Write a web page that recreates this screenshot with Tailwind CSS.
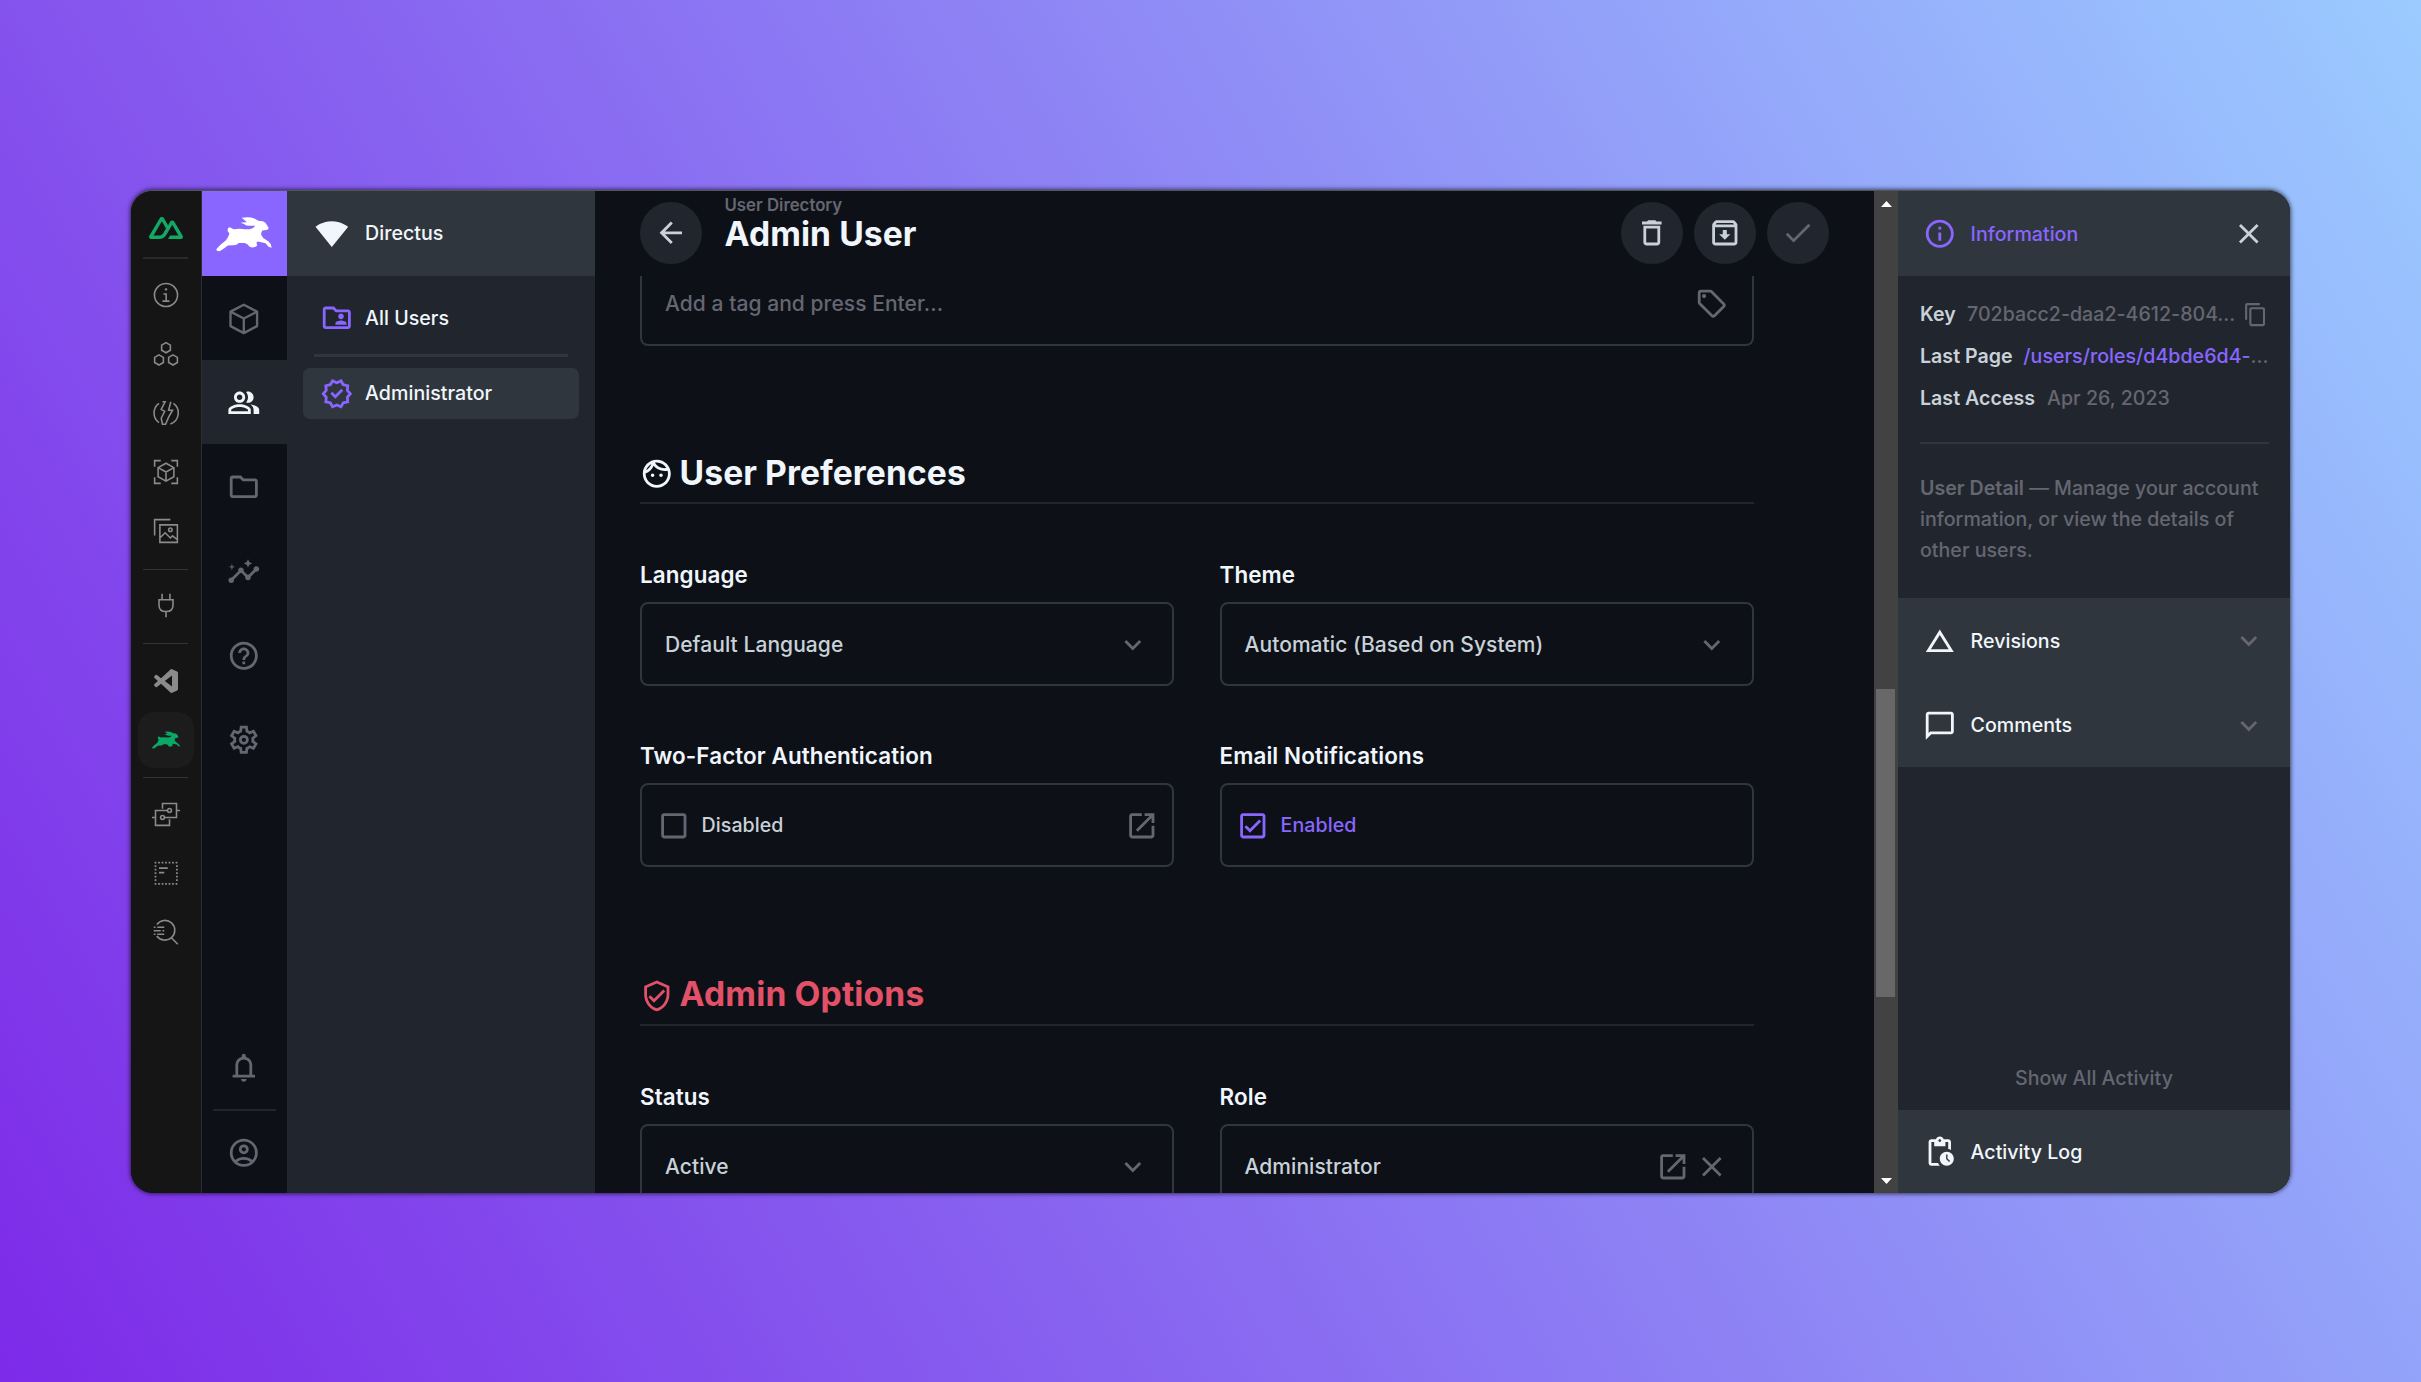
<!DOCTYPE html>
<html lang="en">
<head>
<meta charset="utf-8">
<title>Directus</title>
<script src="https://cdn.jsdelivr.net/npm/@tailwindcss/browser@4"></script>
</head>
<body class="w-[2421px] h-[1382px] overflow-hidden pl-[131px] pt-[190px] bg-[linear-gradient(60deg,#7d2ae8,#9bcbff)] font-['Inter',sans-serif] text-[#f0f6fc]">
<svg class="hidden">
  <symbol id="rabbit" viewBox="289 110 168 104"><path d="M289 208L302 194 318 181Q326 172 329 160L324 153Q322 141 330 141L342 147Q360 144 376 147L390 147Q402 144 407 136L397 136Q384 139 371 130L362 127Q374 125 382 126L366 112Q390 108 406 115L416 121Q432 121 438 128L446 140Q450 148 441 149L428 151Q424 158 425 164L431 173 447 184Q457 192 456 203L447 200 438 189 415 184Q408 186 413 195Q410 201 396 202L389 199Q386 191 375 188L357 188Q352 196 338 195L324 196Q316 203 308 208L300 213Q292 215 289 208Z"/></symbol>
</svg>
<div class="flex w-[2159px] h-[1003px] rounded-[22px] overflow-hidden shadow-[0_0_4px_1px_rgba(0,0,0,0.6)] bg-[#0d1117] border-t border-[#505558]">

  <!-- devtools rail -->
  <div class="w-[71px] pr-px shrink-0 bg-[#151515] border-r border-[#2e2e2e] flex flex-col items-center text-[#8b8b8b]">
    <div class="h-[66px] shrink-0 pt-[8px] flex items-center justify-center"><svg class="size-[34px] fill-[#12a866]" viewBox="0 0 24 24"><path d="M13.4642 19.8295h8.9218c.2834 0 .5618-.0723.8072-.2098a1.5899 1.5899 0 0 0 .5908-.5732 1.5293 1.5293 0 0 0 .2158-.783 1.529 1.529 0 0 0-.2167-.7828L17.7916 7.4142a1.5904 1.5904 0 0 0-.5907-.573 1.6524 1.6524 0 0 0-.807-.2099c-.2833 0-.5616.0724-.807.2098a1.5904 1.5904 0 0 0-.5907.5731L13.4642 9.99l-2.9954-5.0366a1.5913 1.5913 0 0 0-.591-.573 1.6533 1.6533 0 0 0-.8071-.2098c-.2834 0-.5617.0723-.8072.2097a1.5913 1.5913 0 0 0-.591.573L.2168 17.4808A1.5292 1.5292 0 0 0 0 18.2635c-.0001.2749.0744.545.2157.783a1.59 1.59 0 0 0 .5908.5732c.2455.1375.5239.2098.8073.2098h5.6003c2.2189 0 3.8552-.9688 4.9811-2.8591l2.7337-4.7 1.4642-2.5155 4.3944 7.5541h-5.8586ZM7.123 17.3694l-3.9083-.0009 5.8586-10.0703 2.9232 5.0352-1.9572 3.366c-.7478 1.2247-1.5973 1.67-2.9163 1.67Z"/></svg></div>
    <div class="w-[45px] h-[2px] bg-[#292929]"></div>
    <div class="mt-[8px] flex flex-col items-center gap-[3px] [&>svg]:my-[14px] [&>svg]:size-7 [&>svg]:shrink-0">
      <svg viewBox="0 0 32 32" fill="none" stroke="currentColor" stroke-width="1.8"><circle cx="16" cy="16" r="13.2"/><path d="M13 14.8h3.2V23M12 23h8"/><circle cx="16" cy="9.6" r="1" fill="currentColor" stroke-width="1"/></svg>
      <svg viewBox="0 0 32 32" fill="none" stroke="currentColor" stroke-width="1.8"><path d="M16 3l5 2.9v5.8L16 14.600l-5-2.900V5.900zM8 17l5 2.900v5.800L8 28.600l-5-2.900v-5.800zM24 17l5 2.900v5.800l-5 2.900-5-2.900v-5.800z"/></svg>
      <svg viewBox="0 0 32 32" fill="none" stroke="currentColor" stroke-width="1.800"><path d="M8 5A13.500 13.500 0 0 0 8 27M24.500 5A13.500 13.500 0 0 1 21 28.600M12 3.200h3l-4.500 8.800 4 2-4 8 1.500 6.800h3.500l3.500-8 4.500-8h-4.500l2.500-9.600"/></svg>
      <svg viewBox="0 0 32 32" fill="none" stroke="currentColor" stroke-width="1.800"><path d="M10 3H3v7M22 3h7v7M10 29H3v-7M22 29h7v-7M16 6l9 5v10.500l-9 5-9-5V11zM7 11l9 5 9-5M16 16v10.500"/></svg>
      <svg viewBox="0 0 32 32" fill="none" stroke="currentColor" stroke-width="1.800"><path d="M9 9h20v20H9zM3 21V3h18M9 24l6-6 6 6 2.500-2.500L29 26"/><circle cx="21" cy="14.500" r="2"/></svg>
      <div class="mt-[7px] mb-[4px] w-[45px] h-px bg-[#333]"></div>
      <svg viewBox="0 0 32 32" fill="none" stroke="currentColor" stroke-width="1.800"><path d="M11.500 3v7M20.500 3v7M8 10h16v6q0 7.500-8 7.500T8 16zM16 23.500V30"/></svg>
      <div class="mt-[7px] mb-[6px] w-[45px] h-px bg-[#333]"></div>
      <svg viewBox="-2 -2 28 28" fill="currentColor"><path d="M23.150 2.587L18.210.21a1.494 1.494 0 0 0-1.705.29l-9.460 8.630-4.120-3.128a.999.999 0 0 0-1.276.057L.327 7.261A1 1 0 0 0 .326 8.740L3.899 12 .326 15.260a1 1 0 0 0 .001 1.479L1.650 17.940a.999.999 0 0 0 1.276.057l4.120-3.128 9.460 8.630a1.492 1.492 0 0 0 1.704.29l4.942-2.377A1.500 1.500 0 0 0 24 20.060V3.939a1.500 1.500 0 0 0-.85-1.352zm-5.146 14.861L10.826 12l7.178-5.448v10.896z"/></svg>
      <div class="size-14 rounded-2xl bg-[#1c1c1c] flex items-center justify-center"><svg class="w-7 h-[18px] fill-[#0aa966]"><use href="#rabbit"/></svg></div>
      <div class="mt-[6px] mb-[5px] w-[45px] h-px bg-[#333]"></div>
      <svg viewBox="0 0 32 32" fill="none" stroke="currentColor" stroke-width="1.800"><path d="M12 10V4h16v16H14M20 22v7H4V12h14M0 20h4M28 12h4"/><circle cx="20" cy="12" r="2.200"/><circle cx="12" cy="20" r="2.200"/></svg>
      <svg viewBox="0 0 32 32" fill="none" stroke="currentColor" stroke-width="2"><path stroke-dasharray="2 2" d="M3 4h27M3 28.500h27M4 7v20M28.500 7v20"/><path d="M8 10.500h10M8 15.500h6"/></svg>
      <svg viewBox="0 0 32 32" fill="none" stroke="currentColor" stroke-width="1.800"><path d="M5.500 7.500A11.300 11.300 0 1 1 5.500 20.500M21.500 22l8 8M2 10.500h2M6 10.500h8M2 14.500h8M12 14.500h2M2 18.500h2M6 18.500h8"/></svg>
    </div>
  </div>

  <!-- module bar -->
  <div class="w-[84.500px] shrink-0 bg-[#0d1117] flex flex-col text-[#666672] [&>div>svg]:size-[33.600px] [&>div]:flex [&>div]:items-center [&>div]:justify-center [&>div]:shrink-0">
    <div class="h-[84.500px] bg-[#8866ff] pt-[2px]"><svg class="fill-white !w-[56px] !h-[34.500px]"><use href="#rabbit"/></svg></div>
    <div class="h-[84.300px] pt-[2px]"><svg viewBox="0 0 24 24" fill="none" stroke="currentColor" stroke-width="1.700"><path stroke-linejoin="round" d="M12 2l9.500 4.900V17.200L12 22.200 2.500 17.200V6.900zM2.500 6.900L12 11.800l9.500-4.900M12 11.800v10.400"/></svg></div>
    <div class="h-[84.300px] pt-[2px] bg-[#21262e] text-[#f0f6fc]"><svg viewBox="0 0 24 24" fill="currentColor"><path d="M16.670 13.130C18.040 14.060 19 15.320 19 17v3h4v-3c0-2.180-3.570-3.470-6.330-3.870zM15 12c2.210 0 4-1.790 4-4s-1.790-4-4-4c-.47 0-.91.1-1.330.24C14.500 5.270 15 6.580 15 8s-.5 2.730-1.330 3.760c.42.14.86.24 1.330.24zM9 12c2.210 0 4-1.790 4-4s-1.790-4-4-4-4 1.790-4 4 1.790 4 4 4zm0-6c1.100 0 2 .9 2 2s-.9 2-2 2-2-.9-2-2 .9-2 2-2zM9 13c-2.670 0-8 1.340-8 4v3h16v-3c0-2.660-5.330-4-8-4zm6 5H3v-.99C3.200 16.290 6.300 15 9 15s5.800 1.290 6 2v1z"/></svg></div>
    <div class="h-[84.300px] pt-[2px]"><svg viewBox="0 0 24 24" fill="currentColor"><path d="M9.170 6l2 2H20v10H4V6h5.170M10 4H4c-1.100 0-1.990.9-1.990 2L2 18c0 1.100.9 2 2 2h16c1.100 0 2-.9 2-2V8c0-1.100-.9-2-2-2h-8l-2-2z"/></svg></div>
    <div class="h-[84.300px] pt-[2px]"><svg viewBox="0 0 24 24" fill="currentColor"><path d="M21 8c-1.450 0-2.260 1.440-1.930 2.510l-3.550 3.560c-.3-.09-.74-.09-1.040 0l-2.550-2.550C12.270 10.450 11.460 9 10 9c-1.450 0-2.270 1.440-1.930 2.520l-4.560 4.550C2.440 15.740 1 16.550 1 18c0 1.100.9 2 2 2 1.450 0 2.260-1.440 1.930-2.510l4.550-4.560c.3.09.74.09 1.040 0l2.550 2.550C12.730 16.550 13.540 18 15 18c1.450 0 2.270-1.440 1.930-2.520l3.560-3.550C21.560 12.260 23 11.450 23 10c0-1.100-.9-2-2-2zM15 9l.94-2.070L18 6l-2.060-.93L15 3l-.92 2.070L12 6l2.080.93zM3.500 11L4 9l2-.5L4 8l-.5-2L3 8l-2 .5L3 9z"/></svg></div>
    <div class="h-[84.300px] pt-[2px]"><svg viewBox="0 0 24 24" fill="currentColor"><path d="M11 18h2v-2h-2v2zm1-16C6.480 2 2 6.480 2 12s4.480 10 10 10 10-4.480 10-10S17.520 2 12 2zm0 18c-4.410 0-8-3.590-8-8s3.590-8 8-8 8 3.590 8 8-3.590 8-8 8zm0-14c-2.210 0-4 1.790-4 4h2c0-1.100.9-2 2-2s2 .9 2 2c0 2-3 1.750-3 5h2c0-2.250 3-2.500 3-5 0-2.210-1.790-4-4-4z"/></svg></div>
    <div class="h-[84.300px] pt-[2px]"><svg viewBox="0 0 24 24" fill="currentColor"><path d="m9.250 22-.4-3.200q-.325-.125-.612-.3-.288-.175-.563-.375L4.700 19.375l-2.750-4.750 2.575-1.950Q4.500 12.500 4.500 12.337v-.675q0-.162.025-.337L1.950 9.375l2.750-4.750 2.975 1.250q.275-.2.575-.375.3-.175.6-.3l.4-3.200h5.500l.4 3.200q.325.125.613.3.287.175.562.375l2.975-1.250 2.750 4.750-2.575 1.950q.025.175.025.337v.675q0 .163-.05.338l2.575 1.950-2.750 4.750-2.950-1.250q-.275.2-.575.375-.3.175-.6.3l-.4 3.200Zm2.800-6.500q1.450 0 2.475-1.025Q15.550 13.450 15.550 12q0-1.450-1.025-2.475Q13.500 8.500 12.050 8.500q-1.475 0-2.488 1.025Q8.550 10.550 8.550 12q0 1.450 1.012 2.475Q10.575 15.500 12.050 15.500Zm0-2q-.625 0-1.062-.438Q10.550 12.625 10.550 12t.438-1.062q.437-.438 1.062-.438t1.063.438q.437.437.437 1.062t-.437 1.062q-.438.438-1.063.438ZM11 20h1.975l.35-2.650q.775-.2 1.438-.587.662-.388 1.212-.938l2.475 1.025.975-1.700-2.150-1.625q.125-.35.175-.737.05-.388.05-.788t-.05-.787q-.05-.388-.175-.738l2.150-1.625-.975-1.700-2.475 1.050q-.55-.575-1.212-.963-.663-.387-1.438-.587L13 4h-1.975l-.35 2.650q-.775.2-1.437.587-.663.388-1.213.938L5.550 7.150l-.975 1.700 2.150 1.600q-.125.375-.175.750-.05.375-.05.8 0 .4.05.775t.175.750l-2.150 1.625.975 1.700 2.475-1.050q.55.575 1.213.962.662.388 1.437.588Z"/></svg></div>
    <div class="mt-auto h-[83px] pt-[2px]"><svg viewBox="0 0 24 24" fill="currentColor"><path d="M4 19v-2h2v-7q0-2.075 1.250-3.687Q8.500 4.700 10.500 4.200v-.7q0-.625.438-1.062Q11.375 2 12 2t1.063.438q.437.437.437 1.062v.7q2 .5 3.250 2.113Q18 7.925 18 10v7h2v2Zm8 3q-.825 0-1.412-.587Q10 20.825 10 20h4q0 .825-.587 1.413Q12.825 22 12 22Zm-4-5h8v-7q0-1.650-1.175-2.825Q13.650 6 12 6q-1.650 0-2.825 1.175Q8 8.350 8 10Z"/></svg></div>
    <div class="mx-[11px] h-[2.500px] bg-[#21262e]"></div>
    <div class="h-[82px] pt-px"><svg viewBox="0 0 24 24" fill="currentColor"><path d="M5.850 17.100q1.275-.975 2.850-1.538Q10.275 15 12 15t3.300.562q1.575.563 2.850 1.538.875-1.025 1.363-2.325Q20 13.475 20 12q0-3.325-2.337-5.663Q15.325 4 12 4T6.338 6.337Q4 8.675 4 12q0 1.475.488 2.775.487 1.300 1.362 2.325ZM12 13q-1.475 0-2.488-1.012Q8.500 10.975 8.500 9.500t1.012-2.488Q10.525 6 12 6t2.488 1.012Q15.500 8.025 15.500 9.500t-1.012 2.488Q13.475 13 12 13Zm0 9q-2.075 0-3.900-.788-1.825-.787-3.175-2.137-1.350-1.350-2.137-3.175Q2 14.075 2 12t.788-3.900q.787-1.825 2.137-3.175 1.350-1.350 3.175-2.138Q9.925 2 12 2t3.900.787q1.825.788 3.175 2.138 1.350 1.350 2.137 3.175Q22 9.925 22 12t-.788 3.900q-.787 1.825-2.137 3.175-1.350 1.350-3.175 2.137Q14.075 22 12 22Zm0-2q1.325 0 2.500-.387 1.175-.388 2.150-1.113-.975-.725-2.150-1.113Q13.325 17 12 17t-2.500.387q-1.175.388-2.150 1.113.975.725 2.150 1.113Q10.675 20 12 20Zm0-9q.65 0 1.075-.425.425-.425.425-1.075 0-.65-.425-1.075Q12.650 8 12 8q-.65 0-1.075.425Q10.500 8.850 10.500 9.500q0 .65.425 1.075Q11.350 11 12 11Z"/></svg></div>
  </div>

  <!-- navigation -->
  <div class="w-[308.500px] shrink-0 bg-[#21262e] text-[19.600px] font-medium tracking-[0.03px]">
    <div class="h-[84.500px] pt-px bg-[#30363d] flex items-center pl-[28px] gap-[17px]">
      <svg class="size-[33.600px] fill-[#f0f6fc]" viewBox="0 0 24 24"><path d="M12.010 21.490L23.640 7c-.45-.34-4.930-4-11.640-4C5.280 3 .81 6.660.36 7l11.630 14.490.01.01.01-.01z"/></svg>
      <span>Directus</span>
    </div>
    <div class="pl-[16.500px] pr-[16.500px] pt-[17px]">
      <div class="h-[50.500px] pt-px flex items-center pl-[17px] gap-[11.500px]">
        <svg class="size-[33.600px] fill-[#8866ff]" viewBox="0 0 24 24"><path d="M20 6h-8l-2-2H4c-1.100 0-1.990.9-1.990 2L2 18c0 1.100.9 2 2 2h16c1.100 0 2-.9 2-2V8c0-1.100-.9-2-2-2zm0 12H4V6h5.170l2 2H20v10zM15 13c1.100 0 2-.9 2-2s-.9-2-2-2-2 .9-2 2 .9 2 2 2zM11 17h8v-1c0-1.330-2.670-2-4-2s-4 .67-4 2v1z"/></svg>
        <span>All Users</span>
      </div>
      <div class="mt-[11px] mb-[11.500px] mx-[11px] h-[2.500px] bg-[#30363d]"></div>
      <div class="h-[50.500px] pt-px rounded-[7px] bg-[#30363d] flex items-center pl-[17px] gap-[11.500px]">
        <svg class="size-[33.600px] fill-[#8866ff]" viewBox="0 0 24 24"><path d="m8.600 22.500-1.900-3.200-3.600-.8.350-3.700L1 12l2.450-2.800-.35-3.700 3.600-.8 1.900-3.200L12 2.950l3.400-1.450 1.900 3.200 3.600.8-.35 3.700L23 12l-2.450 2.800.35 3.700-3.600.8-1.900 3.200-3.400-1.450Zm.85-2.550 2.550-1.100 2.600 1.100 1.400-2.400 2.750-.65-.25-2.800 1.850-2.100-1.850-2.150.25-2.800-2.750-.6-1.450-2.400L12 5.150l-2.600-1.100L8 6.450l-2.750.6.25 2.800L3.650 12l1.850 2.100-.25 2.850 2.750.6Zm1.500-4.400L16.600 9.900l-1.400-1.450-4.250 4.250-2.150-2.100L7.400 12Z"/></svg>
        <span>Administrator</span>
      </div>
    </div>
  </div>

  <!-- item form -->
  <div class="w-[1279px] shrink-0 h-full flex flex-col overflow-hidden text-[#c9d1d9]">
    <div class="h-[84.500px] shrink-0 flex items-center pl-[45px] pr-[45px]">
      <div class="size-[62px] rounded-full bg-[#21262e] flex items-center justify-center"><svg class="size-[33.600px] fill-current" viewBox="0 0 24 24"><path d="M20 11H7.830l5.590-5.590L12 4l-8 8 8 8 1.410-1.410L7.830 13H20v-2z"/></svg></div>
      <div class="ml-[22.500px] -mt-[27px]">
        <div class="text-[16.800px] leading-[22px] font-semibold text-[#666672]"><span>User Directory</span></div>
        <div class="text-[33.600px] leading-[36px] h-[30px] font-bold tracking-[0.1px] text-[#f0f6fc]"><span>Admin User</span></div>
      </div>
      <div class="ml-auto flex gap-[11px] [&>div]:size-[62px] [&>div]:rounded-full [&>div]:bg-[#21262e] [&>div]:flex [&>div]:items-center [&>div]:justify-center">
        <div><svg class="size-[33.600px] fill-current" viewBox="0 0 24 24"><path d="M16 9v10H8V9h8m-1.500-6h-5l-1 1H5v2h14V4h-3.500l-1-1zM18 7H6v12c0 1.100.9 2 2 2h8c1.100 0 2-.9 2-2V7z"/></svg></div>
        <div><svg class="size-[33.600px] fill-current" viewBox="0 0 24 24"><path d="M20.540 5.230l-1.390-1.680C18.880 3.210 18.470 3 18 3H6c-.47 0-.88.21-1.160.55L3.460 5.230C3.170 5.570 3 6.020 3 6.500V19c0 1.100.9 2 2 2h14c1.100 0 2-.9 2-2V6.500c0-.48-.17-.93-.46-1.270zM6.240 5h11.520l.83 1H5.420l.82-1zM5 19V8h14v11H5zm8.450-9h-2.900v3H8l4 4 4-4h-2.550z"/></svg></div>
        <div class="text-[#666672]"><svg class="size-[33.600px] fill-current" viewBox="0 0 24 24"><path d="M9 16.170L4.830 12l-1.420 1.410L9 19 21 7l-1.410-1.410L9 16.170z"/></svg></div>
      </div>
    </div>
    <div class="ml-[45px] w-[1113.500px] text-[21px] font-medium tracking-[0.06px]">
      <div class="h-[70px] border-[2.800px] border-t-0 border-[#30363d] rounded-b-[8px] flex items-start pt-[11px] pl-[23px] pr-[23px] text-[#666672]">
        <span class="leading-[34px]">Add a tag and press Enter...</span>
        <svg class="ml-auto size-[33.600px] fill-current" viewBox="0 0 24 24"><path d="M21.410 11.580l-9-9C12.050 2.220 11.550 2 11 2H4c-1.100 0-2 .9-2 2v7c0 .55.22 1.050.59 1.420l9 9c.36.36.86.58 1.410.58s1.050-.22 1.410-.59l7-7c.37-.36.59-.86.59-1.410s-.23-1.060-.59-1.420zM13 20.010L4 11V4h7v-.01l9 9-7 7.020z"/><circle cx="6.500" cy="6.500" r="1.500"/></svg>
      </div>
      <div class="mt-[102.500px] h-[48px] pt-[2px] flex items-center gap-[6px] text-[33.600px] font-bold tracking-[0.1px] text-[#f0f6fc]">
        <svg class="size-[33.600px] fill-current mt-[2px]" viewBox="0 0 24 24"><path d="M10.250 13c0 .69-.56 1.250-1.250 1.250S7.750 13.690 7.750 13s.56-1.250 1.250-1.250 1.250.56 1.250 1.250zM15 11.750c-.69 0-1.250.56-1.250 1.250s.56 1.250 1.250 1.250 1.250-.56 1.250-1.250-.56-1.250-1.250-1.250zm7 .25c0 5.520-4.480 10-10 10S2 17.520 2 12 6.480 2 12 2s10 4.480 10 10zM10.660 4.120C12.060 6.440 14.600 8 17.500 8c.46 0 .91-.05 1.340-.12C17.440 5.560 14.900 4 12 4c-.46 0-.91.05-1.340.12zM4.420 9.470c1.710-.97 3.030-2.550 3.660-4.440C6.370 6 5.050 7.580 4.420 9.470zM20 12c0-.78-.12-1.530-.33-2.240-.7.15-1.420.24-2.170.24-3.130 0-5.920-1.440-7.760-3.690C8.690 8.870 6.600 10.880 4 11.860c.01.04 0 .09 0 .14 0 4.410 3.590 8 8 8s8-3.590 8-8z"/></svg>
        <span>User Preferences</span>
      </div>
      <div class="mt-[6px] h-[2px] bg-[#21262e]"></div>
      <div class="mt-[56px] grid grid-cols-2 gap-x-[45.500px] gap-y-[55px]">
        <div>
          <div class="text-[22.400px] leading-[28px] pt-px font-semibold tracking-[0.11px] text-[#f0f6fc]"><span>Language</span></div>
          <div class="mt-[13px] h-[84px] pt-px border-[2.800px] border-[#30363d] rounded-[8px] flex items-center pl-[23px] pr-[22px]"><span>Default Language</span><svg class="ml-auto size-[33.600px] fill-[#666672]" viewBox="0 0 24 24"><path d="M16.590 8.590L12 13.170 7.410 8.590 6 10l6 6 6-6z"/></svg></div>
        </div>
        <div>
          <div class="text-[22.400px] leading-[28px] pt-px font-semibold tracking-[0.11px] text-[#f0f6fc]"><span>Theme</span></div>
          <div class="mt-[13px] h-[84px] pt-px border-[2.800px] border-[#30363d] rounded-[8px] flex items-center pl-[23px] pr-[23px]"><span>Automatic (Based on System)</span><svg class="ml-auto size-[33.600px] fill-[#666672]" viewBox="0 0 24 24"><path d="M16.590 8.590L12 13.170 7.410 8.590 6 10l6 6 6-6z"/></svg></div>
        </div>
        <div>
          <div class="text-[22.400px] leading-[28px] pt-px font-semibold tracking-[0.11px] text-[#f0f6fc]"><span>Two-Factor Authentication</span></div>
          <div class="mt-[13px] h-[84px] pt-[2px] border-[2.800px] border-[#30363d] rounded-[8px] flex items-center pl-[15px] pr-[13px]"><svg class="size-[33.600px] fill-[#666672]" viewBox="0 0 24 24"><path d="M19 5v14H5V5h14m0-2H5c-1.100 0-2 .9-2 2v14c0 1.100.9 2 2 2h14c1.100 0 2-.9 2-2V5c0-1.100-.9-2-2-2z"/></svg><span class="ml-[11px] text-[19.600px]">Disabled</span><svg class="ml-auto size-[33.600px] fill-[#666672]" viewBox="0 0 24 24"><path d="M19 19H5V5h7V3H5c-1.110 0-2 .9-2 2v14c0 1.100.89 2 2 2h14c1.100 0 2-.9 2-2v-7h-2v7zM14 3v2h3.590l-9.830 9.830 1.410 1.410L19 6.410V10h2V3h-7z"/></svg></div>
        </div>
        <div>
          <div class="text-[22.400px] leading-[28px] pt-px font-semibold tracking-[0.11px] text-[#f0f6fc]"><span>Email Notifications</span></div>
          <div class="mt-[13px] h-[84px] pt-[2px] border-[2.800px] border-[#30363d] rounded-[8px] flex items-center pl-[14px] text-[#8866ff]"><svg class="size-[33.600px] fill-current" viewBox="0 0 24 24"><path d="M19 3H5c-1.100 0-2 .9-2 2v14c0 1.100.9 2 2 2h14c1.100 0 2-.9 2-2V5c0-1.100-.9-2-2-2zm0 16H5V5h14v14zM17.990 9l-1.410-1.420-6.590 6.590-2.580-2.570-1.420 1.410 4 3.990z"/></svg><span class="ml-[11.500px] text-[19.600px]">Enabled</span></div>
        </div>
      </div>
      <div class="mt-[102.500px] h-[48px] pt-[2px] flex items-center gap-[6px] text-[33.600px] font-bold tracking-[0.15px] text-[#e35169]">
        <svg class="size-[33.600px] fill-current mt-[2px]" viewBox="0 0 24 24"><path d="M12 1L3 5v6c0 5.550 3.840 10.740 9 12 5.160-1.260 9-6.450 9-12V5l-9-4zm7 10c0 4.520-2.980 8.690-7 9.930-4.020-1.240-7-5.410-7-9.930V6.300l7-3.110 7 3.110V11zm-11.590.59L6 13l4 4 8-8-1.410-1.420L10 14.170z"/></svg>
        <span>Admin Options</span>
      </div>
      <div class="mt-[6.500px] h-[2px] bg-[#21262e]"></div>
      <div class="mt-[55.500px] grid grid-cols-2 gap-x-[45.500px]">
        <div>
          <div class="text-[22.400px] leading-[28px] pt-px font-semibold tracking-[0.11px] text-[#f0f6fc]"><span>Status</span></div>
          <div class="mt-[13px] h-[84px] pt-[2px] border-[2.800px] border-[#30363d] rounded-[8px] flex items-center pl-[23px] pr-[22px]"><span>Active</span><svg class="ml-auto size-[33.600px] fill-[#666672]" viewBox="0 0 24 24"><path d="M16.590 8.590L12 13.170 7.410 8.590 6 10l6 6 6-6z"/></svg></div>
        </div>
        <div>
          <div class="text-[22.400px] leading-[28px] pt-px font-semibold tracking-[0.11px] text-[#f0f6fc]"><span>Role</span></div>
          <div class="mt-[13px] h-[84px] pt-[2px] border-[2.800px] border-[#30363d] rounded-[8px] flex items-center pl-[23px] pr-[23px] gap-[5.500px] text-[#666672]"><span class="text-[#c9d1d9]">Administrator</span><svg class="ml-auto size-[33.600px] fill-current" viewBox="0 0 24 24"><path d="M19 19H5V5h7V3H5c-1.110 0-2 .9-2 2v14c0 1.100.89 2 2 2h14c1.100 0 2-.9 2-2v-7h-2v7zM14 3v2h3.590l-9.830 9.830 1.410 1.410L19 6.410V10h2V3h-7z"/></svg><svg class="size-[33.600px] fill-current" viewBox="0 0 24 24"><path d="M19 6.410L17.590 5 12 10.590 6.410 5 5 6.410 10.590 12 5 17.590 6.410 19 12 13.410 17.590 19 19 17.590 13.410 12z"/></svg></div>
        </div>
      </div>
    </div>
  </div>

  <!-- scrollbar -->
  <div class="w-[24px] shrink-0 bg-[#424242] flex flex-col items-center">
    <svg class="mt-[10px] w-[11px] h-[6px] fill-white" viewBox="0 0 11 6"><path d="M5.500 0L11 6H0z"/></svg>
    <div class="mt-[482px] mr-px w-[19px] h-[308px] bg-[#686868]"></div>
    <svg class="mt-auto mb-[9px] w-[11px] h-[6px] fill-white" viewBox="0 0 11 6"><path d="M5.500 6L11 0H0z"/></svg>
  </div>

  <!-- sidebar -->
  <div class="flex-1 min-w-0 bg-[#21262e] flex flex-col text-[19.600px] font-medium tracking-[0.02px]">
    <div class="h-[84.500px] shrink-0 pt-[2px] bg-[#30363d] flex items-center pl-[25px] pr-[24px] text-[#8866ff]"><svg class="size-[33.600px] fill-current" viewBox="0 0 24 24"><path d="M11 7h2v2h-2zm0 4h2v6h-2zm1-9C6.480 2 2 6.480 2 12s4.480 10 10 10 10-4.480 10-10S17.520 2 12 2zm0 18c-4.410 0-8-3.590-8-8s3.590-8 8-8 8 3.590 8 8-3.590 8-8 8z"/></svg><span class="ml-[14px]">Information</span><svg class="ml-auto size-[33.600px] fill-[#c9d1d9]" viewBox="0 0 24 24"><path d="M19 6.410L17.590 5 12 10.590 6.410 5 5 6.410 10.590 12 5 17.590 6.410 19 12 13.410 17.590 19 19 17.590 13.410 12z"/></svg></div>
    <div class="h-[322.500px] shrink-0 pl-[22px] pr-[21.500px] pt-[24px] text-[#666672]">
      <div class="h-[30px] flex items-center"><span class="w-[47px] font-semibold text-[#c9d1d9]">Key</span><span class="whitespace-nowrap">702bacc2-daa2-4612-804...</span><svg class="ml-auto size-[25.200px] fill-current" viewBox="0 0 24 24"><path d="M16 1H4c-1.100 0-2 .9-2 2v14h2V3h12V1zm3 4H8c-1.100 0-2 .9-2 2v14c0 1.100.9 2 2 2h11c1.100 0 2-.9 2-2V7c0-1.100-.9-2-2-2zm0 16H8V7h11v14z"/></svg></div>
      <div class="mt-[12px] h-[30px] flex items-center whitespace-nowrap"><span class="w-[106px] font-semibold text-[#c9d1d9]">Last Page</span><span class="text-[#8866ff]">/users/roles/d4bde6d4-</span><span>...</span></div>
      <div class="mt-[12px] h-[30px] flex items-center"><span class="w-[127px] font-semibold text-[#c9d1d9]">Last Access</span><span>Apr 26, 2023</span></div>
      <div class="mt-[28px] h-[2px] bg-[#30363d]"></div>
      <p class="mt-[29px] leading-[31px] whitespace-nowrap"><b class="font-semibold">User Detail</b><span> — Manage your account</span><br><span>information, or view the details of</span><br><span>other users.</span></p>
    </div>
    <div class="bg-[#30363d] shrink-0">
      <div class="h-[84.500px] pt-[2px] flex items-center pl-[25px] pr-[24px]"><svg class="size-[33.600px] fill-current" viewBox="0 0 24 24"><path d="M12 7.770L18.390 18H5.610L12 7.770M12 4L2 20h20L12 4z"/></svg><span class="ml-[14px]">Revisions</span><svg class="ml-auto size-[33.600px] fill-[#666672]" viewBox="0 0 24 24"><path d="M16.590 8.590L12 13.170 7.410 8.590 6 10l6 6 6-6z"/></svg></div>
      <div class="h-[84.500px] pt-[2px] flex items-center pl-[25px] pr-[24px]"><svg class="size-[33.600px] fill-current" viewBox="0 0 24 24"><path d="M20 2H4c-1.100 0-2 .9-2 2v18l4-4h14c1.100 0 2-.9 2-2V4c0-1.100-.9-2-2-2zm0 14H5.170L4 17.170V4h16v12z"/></svg><span class="ml-[14px]">Comments</span><svg class="ml-auto size-[33.600px] fill-[#666672]" viewBox="0 0 24 24"><path d="M16.590 8.590L12 13.170 7.410 8.590 6 10l6 6 6-6z"/></svg></div>
    </div>
    <div class="mt-auto h-[62px] flex items-center justify-center text-[#666672]"><span>Show All Activity</span></div>
    <div class="h-[83.500px] shrink-0 pt-[2px] bg-[#30363d] flex items-center pl-[25px]"><svg class="size-[33.600px] fill-current" viewBox="0 0 24 24"><path d="M17 12c-2.760 0-5 2.240-5 5s2.240 5 5 5 5-2.240 5-5-2.240-5-5-5zm1.650 7.350L16.500 17.200V14h1v2.790l1.850 1.850-.7.71zM18 3h-3.180C14.400 1.840 13.300 1 12 1s-2.400.84-2.820 2H6c-1.100 0-2 .9-2 2v15c0 1.100.9 2 2 2h6.110c-.59-.57-1.070-1.250-1.420-2H6V5h2v3h8V5h2v5.080c.71.1 1.380.31 2 .6V5c0-1.100-.9-2-2-2zm-6 2c-.55 0-1-.45-1-1s.45-1 1-1 1 .45 1 1-.45 1-1 1z"/></svg><span class="ml-[14px]">Activity Log</span></div>
  </div>
</div>
</body>
</html>
